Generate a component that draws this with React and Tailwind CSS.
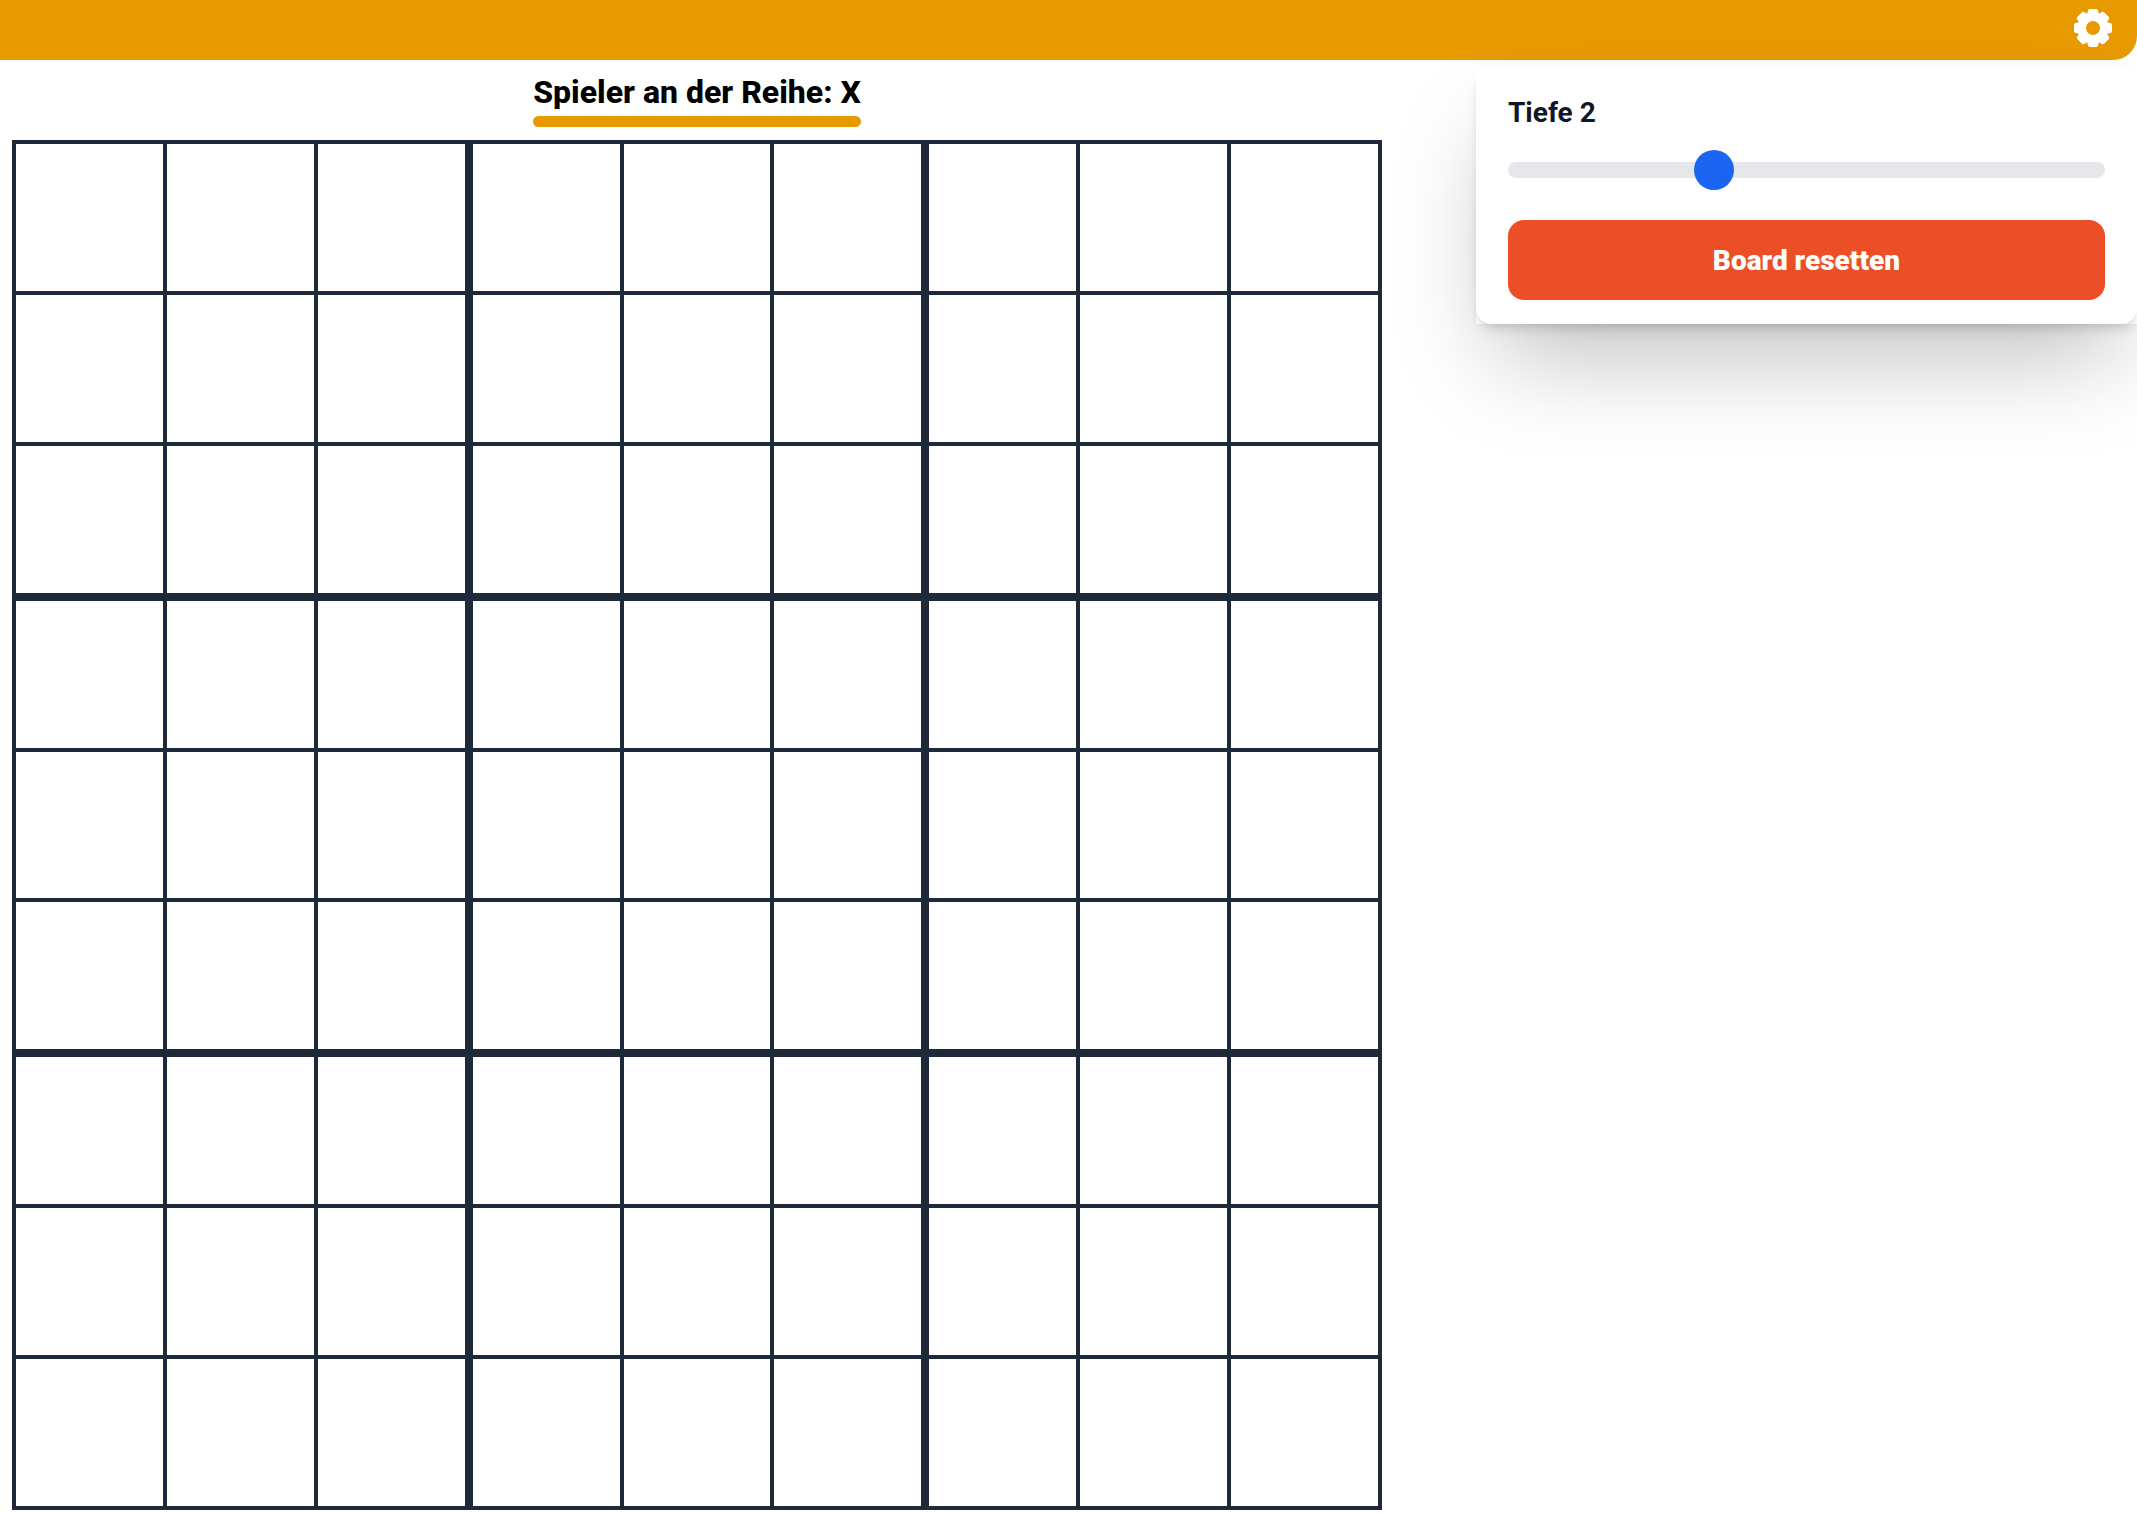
import { useState } from "react";

const NINE = [0, 1, 2, 3, 4, 5, 6, 7, 8];

function GearIcon() {
  const teeth = [0, 45, 90, 135];
  return (
    <svg viewBox="-19 -19 38 38" className="size-[38px]" aria-hidden="true">
      <defs>
        <mask id="gear-hole">
          <rect x="-19" y="-19" width="38" height="38" fill="#fff" />
          <circle r="7" fill="#000" />
        </mask>
      </defs>
      <g fill="currentColor" mask="url(#gear-hole)">
        <circle r="15.5" />
        {teeth.map((a) => (
          <path
            key={a}
            transform={`rotate(${a})`}
            d="M-3-19H3Q4.6-19 5-17.6L6-13V13L5 17.6Q4.6 19 3 19H-3Q-4.6 19-5 17.6L-6 13V-13L-5-17.6Q-4.6-19-3-19Z"
          />
        ))}
      </g>
    </svg>
  );
}

function SmallBoard({ board, cells, onPlay }) {
  return (
    <div className="grid grid-cols-3 grid-rows-3 gap-1">
      {NINE.map((i) => (
        <button
          key={i}
          type="button"
          aria-label={`Feld ${board + 1}-${i + 1}`}
          onClick={() => onPlay(board * 9 + i)}
          className="bg-white text-6xl font-bold text-black"
        >
          {cells[board * 9 + i]}
        </button>
      ))}
    </div>
  );
}

export default function App() {
  const [depth, setDepth] = useState(2);
  const [cells, setCells] = useState({});
  const [open, setOpen] = useState(true);
  const player = Object.keys(cells).length % 2 === 0 ? "X" : "O";

  const play = (id) => {
    if (!cells[id]) setCells({ ...cells, [id]: player });
  };

  return (
    <div className="flex h-screen flex-col overflow-hidden bg-white font-['Roboto',sans-serif]">
      <header className="flex h-[60px] shrink-0 items-start justify-end rounded-br-3xl bg-[#e79a00] pt-[9px] pr-[25px]">
        <button type="button" aria-label="Einstellungen" onClick={() => setOpen(!open)} className="text-white">
          <GearIcon />
        </button>
      </header>

      <main className="flex items-start justify-between">
        <section className="flex flex-col items-center px-3">
          <h1 className="mt-3 text-[32px] leading-10 font-extrabold text-black">
            Spieler an der Reihe: {player}
            <span className="mt-1 block h-[11px] rounded-md bg-[#e79a00]" />
          </h1>
          <div className="mt-[13px] grid aspect-square w-[calc(100vh-149px)] grid-cols-3 grid-rows-3 gap-2 bg-gray-800 p-1">
            {NINE.map((b) => (
              <SmallBoard key={b} board={b} cells={cells} onPlay={play} />
            ))}
          </div>
        </section>

        {open && (
          <aside className="mt-2 w-[661px] shadow-[0_50px_100px_-20px_rgba(0,0,0,0.26)]">
            <div className="flex flex-col rounded-2xl bg-white px-8 py-6 shadow-[0_8px_12px_-2px_rgba(0,0,0,0.1),0_4px_8px_-4px_rgba(0,0,0,0.1)]">
              <label htmlFor="depth" className="text-[28px] leading-[42px] font-bold text-gray-900">
                Tiefe {depth}
              </label>
              <input
                id="depth"
                type="range"
                min="1"
                max="4"
                value={depth}
                onChange={(e) => setDepth(Number(e.target.value))}
                className="mt-7 h-4 w-full cursor-pointer appearance-none rounded-lg bg-gray-200 [&::-webkit-slider-thumb]:size-10 [&::-webkit-slider-thumb]:appearance-none [&::-webkit-slider-thumb]:rounded-full [&::-webkit-slider-thumb]:bg-[#1c64f2]"
              />
              <button
                type="button"
                onClick={() => setCells({})}
                className="mt-[42px] h-20 rounded-2xl bg-[#ec4f27] pt-0.5 text-[28px] leading-10 font-black text-white"
              >
                Board resetten
              </button>
            </div>
          </aside>
        )}
      </main>
    </div>
  );
}
